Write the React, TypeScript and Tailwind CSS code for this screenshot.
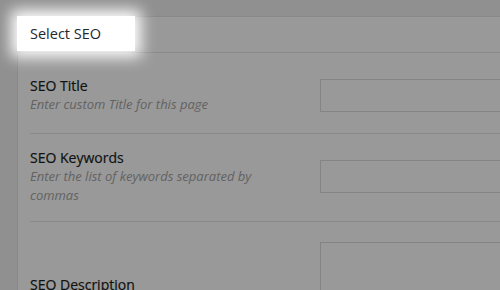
import React from "react";

const rows = [
	{ label: "SEO Title", hint: "Enter custom Title for this page", h: "h-[81px]", labelTop: "mt-[23px]", fieldTop: "mt-[26px]", field: "h-[33px]" },
	{ label: "SEO Keywords", hint: "Enter the list of keywords separated by commas", h: "h-[88px]", labelTop: "mt-[14px]", fieldTop: "mt-[26px]", field: "h-[33px]" },
	{ label: "SEO Description", hint: "", h: "h-[126px]", labelTop: "mt-[53px]", fieldTop: "mt-[20px]", field: "h-[86px]" },
];

export default function App() {
	return (
		<div
			className="relative h-[290px] w-[500px] overflow-hidden bg-[#f1f1f1]"
			style={{ fontFamily: "'Open Sans', sans-serif" }}
		>
			<div className="pl-[17px] pt-4">
				<div className="w-[620px] border border-[#e5e5e5] bg-white">
					<div className="flex h-[36px] items-center border-b border-[#e5e5e5] pl-3 text-[14.5px] text-[#23282d]">
						Select SEO
					</div>
					<div className="px-3">
						{rows.map((row) => (
							<div
								key={row.label}
								className={`flex items-start border-b border-[#e5e5e5] ${row.h}`}
							>
								<div className={`w-[290px] shrink-0 pr-[30px] ${row.labelTop}`}>
									<div className="text-[14px] leading-[19px] text-[#1a1d20] [-webkit-text-stroke:0.2px_#1a1d20]">
										{row.label}
									</div>
									{row.hint && (
										<div className="text-[13px] italic leading-[19px] text-[#a5a5a5]">
											{row.hint}
										</div>
									)}
								</div>
								<div className={`w-[260px] shrink-0 border border-[#dddddd] ${row.fieldTop} ${row.field}`} />
							</div>
						))}
					</div>
				</div>
			</div>

			{/* dim layer */}
			<div className="absolute inset-0 bg-black/40" />

			{/* highlighted step */}
			<div className="absolute left-[17px] top-[16px] flex h-[35px] w-[118px] items-center bg-white pl-[13px] text-[14.5px] text-[#23282d] shadow-[0_0_14px_6px_#ffffff]">
				Select SEO
			</div>
		</div>
	);
}
